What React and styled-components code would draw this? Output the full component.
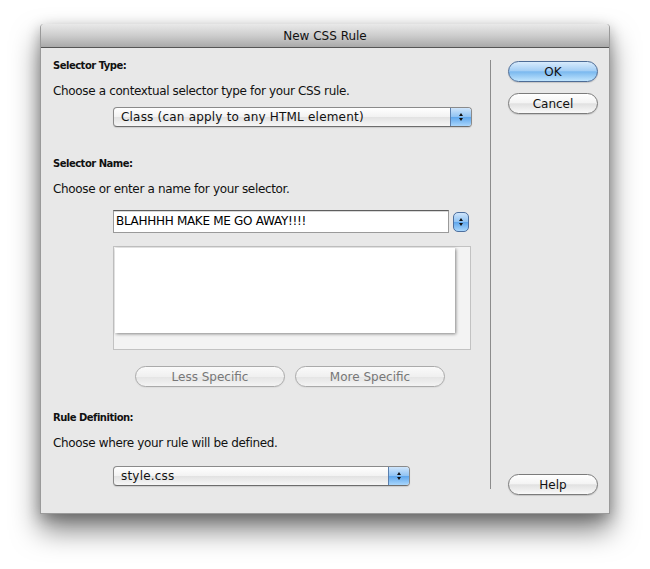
import React from "react";
import styled, { createGlobalStyle } from "styled-components";

const GlobalStyle = createGlobalStyle`
  body {
    margin: 0;
    background: #ffffff;
    font-family: "DejaVu Sans", "Liberation Sans", sans-serif;
  }
`;

const Page = styled.div`
  padding: 24px 0 0 40px;
  height: 569px;
  box-sizing: border-box;
`;

const Window = styled.div`
  width: 570px;
  height: 490px;
  display: flex;
  flex-direction: column;
  background: #e8e8e8;
  border: 1px solid #9a9a9a;
  border-top: none;
  box-sizing: border-box;
  border-radius: 4px 4px 0 0;
  box-shadow: 0 16px 28px rgba(0, 0, 0, 0.5), 0 4px 14px rgba(0, 0, 0, 0.25);
`;

const TitleBar = styled.div`
  height: 23px;
  flex: none;
  display: flex;
  align-items: center;
  justify-content: center;
  background: linear-gradient(#e9e9e9, #cdcdcd 50%, #a9a9a9);
  border-bottom: 1px solid #555;
  border-radius: 4px 4px 0 0;
  font-size: 12px;
  color: #111;
`;

const Body = styled.div`
  flex: 1;
  display: flex;
`;

const LeftPane = styled.div`
  width: 449px;
  padding-left: 12px;
  box-sizing: border-box;
  display: flex;
  flex-direction: column;
`;

const Divider = styled.div`
  width: 1px;
  background: #8c8c8c;
  margin: 12px 0 24px;
`;

const RightPane = styled.div`
  flex: 1;
  padding: 13px 0 18px 17px;
  display: flex;
  flex-direction: column;
  gap: 11px;
`;

const SectionLabel = styled.div`
  font-size: 10px;
  font-weight: bold;
  letter-spacing: -0.5px;
  line-height: 14px;
  color: #111;
  margin-top: ${(p) => p.$top}px;
`;

const Hint = styled.div`
  font-size: 12px;
  letter-spacing: -0.35px;
  line-height: 16px;
  color: #111;
  margin-top: 10px;
`;

const Indent = styled.div`
  margin-left: 60px;
  margin-top: ${(p) => p.$top}px;
  display: flex;
  align-items: center;
  gap: 4px;
`;

const Popup = styled.div`
  width: ${(p) => p.$width}px;
  height: 20px;
  box-sizing: border-box;
  border: 1px solid #8a8a8a;
  border-bottom-color: #6d6d6d;
  border-radius: 4px;
  background: linear-gradient(#ffffff, #f2f2f2 50%, #e2e2e2 51%, #f6f6f6);
  display: flex;
  align-items: center;
  overflow: hidden;
  box-shadow: 0 1px 1px rgba(0, 0, 0, 0.12);
`;

const PopupText = styled.span`
  flex: 1;
  padding-left: 7px;
  font-size: 12px;
  letter-spacing: 0.2px;
  color: #111;
  white-space: nowrap;
`;

const Stepper = styled.span`
  width: ${(p) => (p.$solo ? 16 : 21)}px;
  height: 100%;
  display: flex;
  flex-direction: column;
  align-items: center;
  justify-content: center;
  gap: 2px;
  box-sizing: border-box;
  background: linear-gradient(#cfe5fb, #8ec2f3 50%, #5ea6ec 51%, #a9d6fc);
  border-left: ${(p) => (p.$solo ? "none" : "1px solid #5a7fae")};
  ${(p) =>
    p.$solo &&
    `
    border: 1px solid #4d6f9e;
    border-radius: 5px;
    height: 20px;
  `}
`;

const Arrow = styled.span`
  width: 0;
  height: 0;
  border-left: 2.5px solid transparent;
  border-right: 2.5px solid transparent;
  ${(p) =>
    p.$up
      ? "border-bottom: 3px solid #111;"
      : "border-top: 3px solid #111;"}
`;

const TextField = styled.div`
  width: 336px;
  height: 23px;
  box-sizing: border-box;
  border: 1px solid #9a9a9a;
  border-top-color: #5e5e5e;
  background: #fff;
  box-shadow: inset 0 1px 0 #d8d8d8;
  font-size: 12px;
  letter-spacing: -0.3px;
  padding: 3px 0 0 2px;
  color: #000;
  white-space: nowrap;
`;

const ListBox = styled.div`
  width: 358px;
  height: 104px;
  margin-left: 60px;
  margin-top: 13px;
  box-sizing: border-box;
  border: 1px solid #c2c2c2;
  background: #f3f3f3;
  padding: 1px;
  display: grid;
  grid-template-columns: 1fr 14px;
  grid-template-rows: 1fr 15px;
`;

const ListArea = styled.div`
  background: #fff;
  box-shadow: 1px 1px 3px rgba(0, 0, 0, 0.45);
`;

const ButtonRow = styled.div`
  margin: 16px 0 0 82px;
  display: flex;
  gap: 10px;
`;

const PillButton = styled.button`
  width: ${(p) => p.$width || 90}px;
  height: 21px;
  border-radius: 11px;
  box-sizing: border-box;
  font-family: inherit;
  font-size: 12px;
  padding: 0;
  cursor: default;
  color: ${(p) => (p.$disabled ? "#777" : "#111")};
  border: 1px solid
    ${(p) => (p.$primary ? "#4d6c96" : p.$disabled ? "#aaa" : "#7b7b7b")};
  background: ${(p) =>
    p.$primary
      ? "linear-gradient(#d8ebfc, #a5cff5 45%, #7bb9ef 52%, #bfe4fd)"
      : p.$disabled
      ? "linear-gradient(#fafafa, #f0f0f0 50%, #e4e4e4 51%, #f4f4f4)"
      : "linear-gradient(#ffffff, #f4f4f4 45%, #e1e1e1 52%, #f9f9f9)"};
  box-shadow: 0 1px 1px rgba(0, 0, 0, ${(p) => (p.$disabled ? 0.05 : 0.15)});
`;

const Spacer = styled.div`
  flex: 1;
`;

function UpDown({ solo }) {
  return (
    <Stepper $solo={solo}>
      <Arrow $up />
      <Arrow />
    </Stepper>
  );
}

export default function App() {
  return (
    <Page>
      <GlobalStyle />
      <Window>
        <TitleBar>New CSS Rule</TitleBar>
        <Body>
          <LeftPane>
            <SectionLabel $top={11}>Selector Type:</SectionLabel>
            <Hint>Choose a contextual selector type for your CSS rule.</Hint>
            <Indent $top={8}>
              <Popup $width={359}>
                <PopupText>Class (can apply to any HTML element)</PopupText>
                <UpDown />
              </Popup>
            </Indent>

            <SectionLabel $top={30}>Selector Name:</SectionLabel>
            <Hint>Choose or enter a name for your selector.</Hint>
            <Indent $top={13}>
              <TextField>BLAHHHH MAKE ME GO AWAY!!!!</TextField>
              <UpDown solo />
            </Indent>
            <ListBox>
              <ListArea />
            </ListBox>
            <ButtonRow>
              <PillButton $disabled $width={150}>
                Less Specific
              </PillButton>
              <PillButton $disabled $width={150}>
                More Specific
              </PillButton>
            </ButtonRow>

            <SectionLabel $top={24}>Rule Definition:</SectionLabel>
            <Hint>Choose where your rule will be defined.</Hint>
            <Indent $top={15}>
              <Popup $width={297}>
                <PopupText>style.css</PopupText>
                <UpDown />
              </Popup>
            </Indent>
          </LeftPane>
          <Divider />
          <RightPane>
            <PillButton $primary>OK</PillButton>
            <PillButton>Cancel</PillButton>
            <Spacer />
            <PillButton>Help</PillButton>
          </RightPane>
        </Body>
      </Window>
    </Page>
  );
}
